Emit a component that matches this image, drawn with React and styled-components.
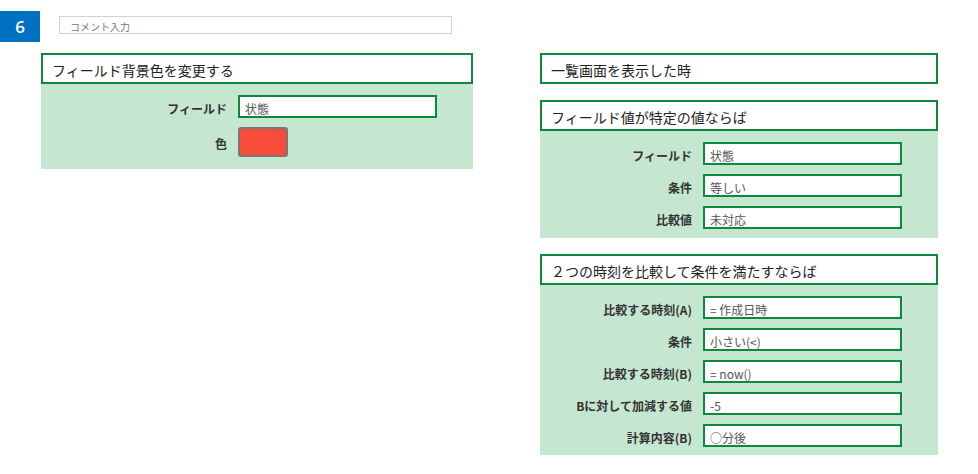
import styled, { createGlobalStyle } from "styled-components";

const GlobalStyles = createGlobalStyle`
  body {
    margin: 0;
    background: #ffffff;
    font-family: "Noto Sans CJK JP", "Noto Sans", sans-serif;
    color: #333;
  }
  * { box-sizing: border-box; }
`;

const Pagina = styled.div`
  width: 978px;
  height: 474px;
  padding-top: 11px;
  overflow: hidden;
`;

const FilaSuperior = styled.div`
  display: flex;
  align-items: flex-start;
`;

const Insignia = styled.div`
  width: 40px;
  height: 31px;
  background: #0070c0;
  color: #fff;
  font-family: "Open Sans", "Noto Sans", sans-serif;
  font-size: 17px;
  font-weight: 600;
  display: flex;
  align-items: center;
  justify-content: center;
`;

const Comentario = styled.div`
  margin-left: 19px;
  margin-top: 5px;
  width: 393px;
  height: 18px;
  border: 1px solid #ddd0c2;
  font-size: 10px;
  color: #777;
  padding: 3px 0 0 10px;
  line-height: 14px;
`;

const Columnas = styled.div`
  display: flex;
  align-items: flex-start;
  gap: 67px;
  padding-left: 41px;
  margin-top: 11px;
`;

const Columna = styled.div`
  width: ${(p) => p.$ancho}px;
  display: flex;
  flex-direction: column;
  gap: 17px;
`;

const Panel = styled.section`
  display: flex;
  flex-direction: column;
  & + & {
    margin-top: ${(p) => p.$separacion || 0}px;
  }
`;

const Cabecera = styled.div`
  height: 31px;
  border: 2px solid #0b8a3c;
  background: #fff;
  font-size: 14px;
  color: #222;
  padding: 3px 0 0 9px;
  display: flex;
  align-items: center;
`;

const Cuerpo = styled.div`
  background: #c5e6cf;
  display: grid;
  grid-template-columns: 1fr 199px;
  column-gap: 11px;
  row-gap: 9px;
  align-items: center;
  padding: ${(p) => p.$arriba}px 36px ${(p) => p.$abajo}px 0;
`;

const Etiqueta = styled.div`
  text-align: right;
  font-size: 12px;
  font-weight: 700;
  color: #333;
  padding-top: 3px;
`;

const Campo = styled.div`
  height: 23px;
  border: 2px solid #0b8a3c;
  background: #fff;
  font-size: 12px;
  color: #555;
  padding: 4px 0 0 5px;
  line-height: 16px;
  white-space: nowrap;
`;

const Muestra = styled.div`
  width: 50px;
  height: 30px;
  border: 2px solid #777;
  border-radius: 3px;
  background: #f84c3a;
`;

const Filas = ({ filas }) =>
  filas.map(([etiqueta, valor]) => [
    <Etiqueta key={etiqueta + "e"}>{etiqueta}</Etiqueta>,
    <Campo key={etiqueta + "v"}>{valor}</Campo>,
  ]);

const App = () => {
  return (
    <>
      <GlobalStyles />
      <Pagina>
        <FilaSuperior>
          <Insignia>6</Insignia>
          <Comentario>コメント入力</Comentario>
        </FilaSuperior>
        <Columnas>
          <Columna $ancho={432}>
            <Panel>
              <Cabecera>フィールド背景色を変更する</Cabecera>
              <Cuerpo $arriba={11} $abajo={12}>
                <Filas filas={[["フィールド", "状態"]]} />
                <Etiqueta>色</Etiqueta>
                <Muestra />
              </Cuerpo>
            </Panel>
          </Columna>
          <Columna $ancho={398}>
            <Panel>
              <Cabecera>一覧画面を表示した時</Cabecera>
            </Panel>
            <Panel>
              <Cabecera>フィールド値が特定の値ならば</Cabecera>
              <Cuerpo $arriba={11} $abajo={9}>
                <Filas
                  filas={[
                    ["フィールド", "状態"],
                    ["条件", "等しい"],
                    ["比較値", "未対応"],
                  ]}
                />
              </Cuerpo>
            </Panel>
            <Panel $separacion={-1}>
              <Cabecera>２つの時刻を比較して条件を満たすならば</Cabecera>
              <Cuerpo $arriba={11} $abajo={8}>
                <Filas
                  filas={[
                    ["比較する時刻(A)", "= 作成日時"],
                    ["条件", "小さい(<)"],
                    ["比較する時刻(B)", "= now()"],
                    ["Bに対して加減する値", "-5"],
                    ["計算内容(B)", "○分後"],
                  ]}
                />
              </Cuerpo>
            </Panel>
          </Columna>
        </Columnas>
      </Pagina>
    </>
  );
};

export default App;
